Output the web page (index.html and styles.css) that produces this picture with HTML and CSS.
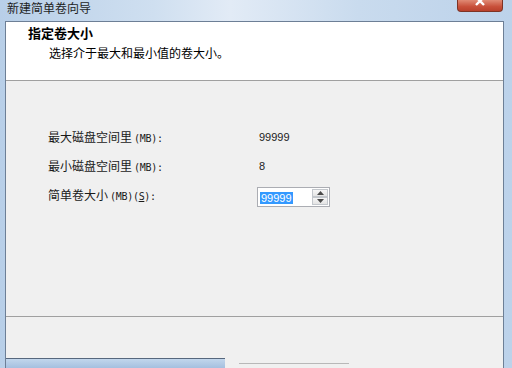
FILE: index.html
```html
<!DOCTYPE html>
<html lang="zh-CN">
<head>
    <meta charset="UTF-8">
    <meta name="viewport" content="width=device-width, initial-scale=1.0">
    <title>新建简单卷向导</title>
    <link rel="stylesheet" href="styles.css">
</head>
<body>
    <div class="window">
        <div class="titlebar">
            <span class="title">新建简单卷向导</span>
            <div class="close">
                <svg width="14" height="8" viewBox="0 0 14 8">
                    <path d="M3 -3 L11 5 M11 -3 L3 5" stroke="#fff" stroke-width="2.4" fill="none"/>
                </svg>
            </div>
        </div>
        <div class="client">
            <div class="header">
                <div class="header-title">指定卷大小</div>
                <div class="header-sub">选择介于最大和最小值的卷大小。</div>
            </div>
            <div class="content">
                <div class="row">
                    <span class="label">最大磁盘空间里<span class="unit">(MB):</span></span>
                    <span class="value">99999</span>
                </div>
                <div class="row">
                    <span class="label">最小磁盘空间里<span class="unit">(MB):</span></span>
                    <span class="value">8</span>
                </div>
                <div class="row">
                    <span class="label">简单卷大小<span class="unit">(MB)(<u>S</u>):</span></span>
                    <div class="spinbox">
                        <span class="field"><span class="selected">99999</span></span>
                        <div class="spin">
                            <div class="spin-btn">
                                <svg width="7" height="4" viewBox="0 0 7 4"><path d="M0 4 L3.5 0 L7 4 Z" fill="#4a4a4a"/></svg>
                            </div>
                            <div class="spin-btn">
                                <svg width="7" height="4" viewBox="0 0 7 4"><path d="M0 0 L3.5 4 L7 0 Z" fill="#4a4a4a"/></svg>
                            </div>
                        </div>
                    </div>
                </div>
            </div>
            <div class="footer"></div>
            <div class="bottom">
                <div class="bottom-left"></div>
                <div class="bottom-right"></div>
            </div>
        </div>
    </div>
</body>
</html>
```

FILE: styles.css
```css
body {
    margin: 0;
    padding: 0;
    font-family: "Noto Sans CJK SC", "Noto Sans", sans-serif;
    font-size: 12px;
    color: #111;
}
.window {
    width: 512px;
    height: 368px;
    overflow: hidden;
    display: flex;
    flex-direction: column;
    background: linear-gradient(90deg, #b8cfe8 0%, #cfdff0 30%, #e2ebf6 45%, #c9dbee 70%, #bcd2ea 100%);
}
.titlebar {
    height: 21px;
    display: flex;
    align-items: flex-start;
    flex-shrink: 0;
}
.title {
    padding: 1px 0 0 7px;
    line-height: 14px;
    color: #1e1e1e;
}
.close {
    margin-left: auto;
    margin-right: 9px;
    width: 46px;
    height: 12px;
    box-sizing: border-box;
    border: 1px solid #7e3325;
    border-top: none;
    border-radius: 0 0 4px 4px;
    background: linear-gradient(#e08a74, #c8503a 60%, #b9412c);
    display: flex;
    justify-content: center;
}
.client {
    flex: 1;
    margin: 0 8px 0 5px;
    border: 1px solid #6d7f96;
    border-bottom: none;
    background-color: #f0f0f0;
    display: flex;
    flex-direction: column;
}
.header {
    background-color: #fff;
    border-bottom: 1px solid #a0a0a0;
    padding: 3px 0 0 22px;
    box-sizing: border-box;
    height: 59px;
}
.header-title {
    font-weight: bold;
    font-size: 13px;
    line-height: 16px;
    color: #000;
}
.header-sub {
    padding: 4px 0 0 21px;
    line-height: 16px;
    color: #000;
}
.content {
    height: 235px;
    padding: 46px 0 0 42px;
    box-sizing: border-box;
    display: flex;
    flex-direction: column;
    gap: 7px;
}
.row {
    display: flex;
    align-items: flex-start;
    line-height: 20px;
}
.label {
    width: 211px;
    color: #1a1a1a;
}
.unit {
    font-family: "DejaVu Sans Mono", monospace;
    font-size: 10px;
    margin-left: 2px;
    letter-spacing: -0.3px;
}
.value {
    font-family: "Liberation Sans", sans-serif;
    font-size: 11px;
    color: #222;
}
.spinbox {
    margin: 2px 0 0 -2px;
    width: 73px;
    height: 20px;
    box-sizing: border-box;
    border: 1px solid #abadb3;
    background-color: #fff;
    display: flex;
    align-items: center;
    padding: 0 1px 0 2px;
}
.field {
    flex: 1;
    line-height: 14px;
}
.selected {
    background-color: #3399ff;
    color: #fff;
    font-family: "Liberation Sans", sans-serif;
    font-size: 11px;
    padding: 0 1px;
}
.spin {
    width: 16px;
    height: 16px;
    display: flex;
    flex-direction: column;
}
.spin-btn {
    flex: 1;
    border: 1px solid #c3c7cc;
    background: linear-gradient(#f6f6f6, #e4e4e4);
    display: flex;
    align-items: center;
    justify-content: center;
}
.footer {
    height: 41px;
    border-top: 1px solid #a0a0a0;
}
.bottom {
    flex: 1;
    display: flex;
}
.bottom-left {
    width: 219px;
    border-top: 1px solid #56677d;
    background: linear-gradient(#c2d6ec, #a5c0df);
}
.bottom-right {
    width: 110px;
    margin: 0 0 4px 14px;
    border-bottom: 1px solid #b8b8b8;
}
```
